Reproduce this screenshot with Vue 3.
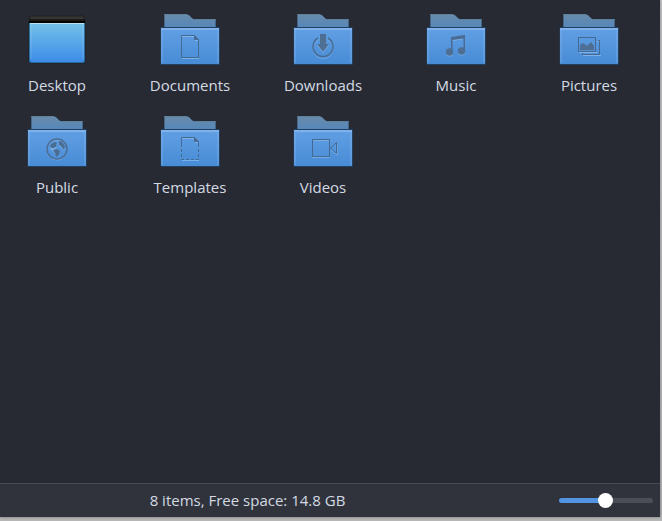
<script setup>
import { ref, computed } from 'vue'

const items = [
  { name: 'Desktop', kind: 'desktop' },
  { name: 'Documents', kind: 'documents' },
  { name: 'Downloads', kind: 'downloads' },
  { name: 'Music', kind: 'music' },
  { name: 'Pictures', kind: 'pictures' },
  { name: 'Public', kind: 'public' },
  { name: 'Templates', kind: 'templates' },
  { name: 'Videos', kind: 'videos' },
]
const zoom = ref(49)
const fill = computed(() => zoom.value + '%')
</script>

<template>
  <div class="backdrop">
    <div class="window">
      <main class="files">
        <button v-for="item in items" :key="item.name" class="item" type="button">
          <svg v-if="item.kind === 'desktop'" class="icon" viewBox="0 0 64 56" aria-hidden="true">
            <defs>
              <linearGradient id="desk" x1="0" y1="0" x2="0" y2="1">
                <stop offset="0" stop-color="#74c1e9" />
                <stop offset="1" stop-color="#3b8ae8" />
              </linearGradient>
            </defs>
            <rect x="3.5" y="3.5" width="57" height="48" rx="3" fill="#1d1f25" />
            <path d="M4 11V7a3 3 0 0 1 3-3h50a3 3 0 0 1 3 3v4z" fill="#2b2b29" />
            <path d="M6 5h52v2H6z" fill="#373733" />
            <path d="M4 7h56v2H4z" fill="#1b1b19" />
            <path d="M4 9h56v2H4z" fill="#030303" />
            <path d="M4 11h56v37a3 3 0 0 1-3 3H7a3 3 0 0 1-3-3z" fill="url(#desk)" />
            <path d="M4.500 11v37a2.500 2.500 0 0 0 2.500 2.500h50a2.500 2.500 0 0 0 2.500-2.500V11" fill="none" stroke="#21628c" stroke-opacity=".8" />
            <path d="M5 11h54v1H5z" fill="#b4e2f2" />
            <path d="M5 12h2v35H5zM57 12h2v35h-2z" fill="#fff" opacity=".08" />
          </svg>

          <svg v-else class="icon" viewBox="0 0 64 56" aria-hidden="true">
            <defs>
              <linearGradient :id="'back-' + item.kind" x1="0" y1="0" x2="0" y2="1">
                <stop offset="0" stop-color="#6a8ba8" />
                <stop offset="1" stop-color="#5487bb" />
              </linearGradient>
              <linearGradient :id="'front-' + item.kind" x1="0" y1="0" x2="0" y2="1">
                <stop offset="0" stop-color="#629fe3" />
                <stop offset="1" stop-color="#478cd6" />
              </linearGradient>
            </defs>
            <path d="M6 16V2h23c3 0 4.500 5 8 5h21v9z" :fill="`url(#back-${item.kind})`" stroke="#1e2835" stroke-opacity=".7" />
            <path d="M6 2.500h23M37 7.500h21" stroke="#7499b6" stroke-opacity=".5" fill="none" />
            <rect x="2.500" y="15" width="59.500" height="38" rx="1" fill="#24405f" />
            <rect x="3" y="16" width="58" height="36" :fill="`url(#front-${item.kind})`" />
            <path d="M3 16h58v2H3z" fill="#8ab7ef" opacity=".75" />
            <path d="M3 18h2v33H3zM59 18h2v33h-2z" fill="#9bc3f5" opacity=".22" />

            <g v-if="item.kind === 'documents' || item.kind === 'templates'" fill="none">
              <path d="M24 46.500h17M24 24.500h12M37 28.500h4" stroke="#8fbdef" stroke-opacity=".7" />
              <path v-if="item.kind === 'documents'" d="M23.500 23.500H36.500L40.500 27.500V45.500H23.500Z" stroke="#456990" />
              <g v-else stroke="#456990">
                <path d="M23.500 33V23.500H36.500L40.500 27.500V33" />
                <path d="M23.500 35V45.500H40.500V35" stroke-dasharray="3 2" />
              </g>
              <path d="M36 23v5h5z" fill="#486c94" />
            </g>

            <g v-else-if="item.kind === 'downloads'" fill="none">
              <path d="M27.500 26.500a10 10 0 1 0 9 0" transform="translate(0 1)" stroke="#8fbdef" stroke-opacity=".55" stroke-width="1" />
              <path d="M27 26a10 10 0 1 0 10 0" stroke="#486c94" stroke-width="1.5" />
              <path d="M26 32l6 8 6-8z" transform="translate(0 1)" fill="#8fbdef" opacity=".7" />
              <path d="M29 22h6v10h3l-6 8-6-8h3z" fill="#4e6f93" />
            </g>

            <g v-else-if="item.kind === 'music'">
              <g transform="translate(0 1)" fill="#8fbdef" stroke="#8fbdef" opacity=".7">
                <circle cx="25.500" cy="40" r="3.500" stroke="none" /><circle cx="37.500" cy="39" r="3.500" stroke="none" />
                <path d="M28.500 27l11-2" stroke-width="2" />
              </g>
              <circle cx="25.500" cy="40" r="3.700" fill="#4e6f93" />
              <circle cx="37.500" cy="39" r="3.700" fill="#4e6f93" />
              <path d="M27 40V25l14-2v16h-1.500V26.500L28.500 28v12z" fill="#4b6c92" />
            </g>

            <g v-else-if="item.kind === 'pictures'" fill="none">
              <path d="M22 40.500h18M26 43.500h18M40 29.500h3" stroke="#8fbdef" stroke-opacity=".75" />
              <rect x="21.500" y="25.500" width="17" height="14" stroke="#456990" />
              <path d="M41 28.500h1.500v14H25.500V41" stroke="#456990" />
              <path d="M23 33l3-2 4 3 4-4 3 4v4H23z" fill="#4e6f93" />
            </g>

            <g v-else-if="item.kind === 'public'">
              <circle cx="32" cy="36" r="10" fill="none" stroke="#8fbdef" stroke-opacity=".6" stroke-width="1" />
              <circle cx="32" cy="35" r="10" fill="none" stroke="#4b6d93" stroke-width="1.5" />
              <path d="M25 33l1-3 4-2 2 1-1 2 1 1-3 3-2 1zM27 35l5-1 3 2-1 4-3 2-1-3zM34 27l3 1 3 4-1 4-3-4-2-1z" fill="#8fbdef" opacity=".6" transform="translate(0 1)" />
              <path d="M25 33l1-3 4-2 2 1-1 2 1 1-3 2-2 0zM28 36l4-1 3 2-1 4-3 2-1-4zM34 27l3 1 3 4-1 4-3-4-2-1z" fill="#4b6d93" />
            </g>

            <g v-else fill="none">
              <path d="M21 43.500h18M22 26.500h16M40 36l6 5V30" stroke="#8fbdef" stroke-opacity=".6" />
              <rect x="21.500" y="25.500" width="17" height="17" stroke="#456990" />
              <path d="M39.500 34L45.500 28.500V39.500Z" stroke="#456990" />
            </g>
          </svg>
          <span class="label">{{ item.name }}</span>
        </button>
      </main>

      <footer class="status">
        <span class="summary">8 items, Free space: 14.8 GB</span>
        <input v-model="zoom" class="slider" type="range" min="0" max="100" aria-label="Icon size" :style="{ '--fill': fill }" />
      </footer>
    </div>
  </div>
</template>

<style>
body {
  margin: 0;
  background: #bcbbbb;
}
</style>

<style scoped>
.backdrop {
  box-sizing: border-box;
  display: flex;
  min-height: 100vh;
  padding: 0 2px 4px 0;
  background: linear-gradient(#c9c9c9, #b8b7b7);
  font-family: "Open Sans", "Noto Sans", sans-serif;
  font-size: 15px;
  line-height: 20px;
}
.window {
  flex: 1;
  display: flex;
  flex-direction: column;
  background: #282a33;
  color: #d3dae3;
  box-shadow: 0 0 3px rgba(0, 0, 0, 0.4);
}
.files {
  flex: 1;
  display: grid;
  grid-template-columns: repeat(auto-fill, 114px);
  align-content: start;
  gap: 19px;
  padding-top: 12px;
}
.item {
  display: flex;
  flex-direction: column;
  align-items: center;
  gap: 7px;
  padding: 0;
  border: 0;
  background: none;
  color: inherit;
  font: inherit;
}
.icon {
  width: 64px;
  height: 56px;
}
.status {
  display: flex;
  align-items: center;
  gap: 64px;
  height: 33px;
  padding-right: 7px;
  border-top: 1px solid #484a53;
  background: #30333c;
}
.summary {
  flex: 1;
  padding-bottom: 2px;
  text-align: center;
}
.slider {
  appearance: none;
  width: 94px;
  height: 16px;
  margin: 0;
  background: none;
}
.slider::-webkit-slider-runnable-track {
  height: 5px;
  border-radius: 3px;
  background: linear-gradient(to right, #5294e2 var(--fill), #4b4d57 var(--fill));
}
.slider::-webkit-slider-thumb {
  appearance: none;
  width: 15px;
  height: 15px;
  margin-top: -5px;
  border-radius: 50%;
  background: #fff;
}
</style>
